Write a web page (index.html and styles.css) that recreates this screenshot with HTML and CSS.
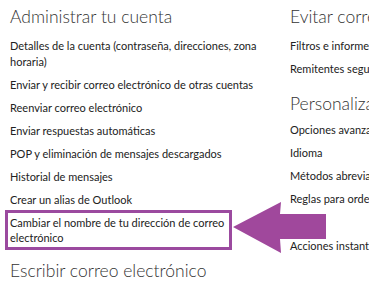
FILE: index.html
```html
<!DOCTYPE html>
<html lang="es">
<head>
    <meta charset="UTF-8">
    <title>Opciones</title>
    <link rel="stylesheet" href="styles.css">
</head>
<body>
    <div class="page">
        <div class="column left">
            <h2>Administrar tu cuenta</h2>
            <ul>
                <li><a href="#">Detalles de la cuenta (contraseña, direcciones, zona horaria)</a></li>
                <li><a href="#">Enviar y recibir correo electrónico de otras cuentas</a></li>
                <li><a href="#">Reenviar correo electrónico</a></li>
                <li><a href="#">Enviar respuestas automáticas</a></li>
                <li><a href="#">POP y eliminación de mensajes descargados</a></li>
                <li><a href="#">Historial de mensajes</a></li>
                <li><a href="#">Crear un alias de Outlook</a></li>
                <li class="highlight"><a href="#">Cambiar el nombre de tu dirección de correo electrónico</a></li>
            </ul>
            <h2>Escribir correo electrónico</h2>
        </div>
        <div class="column right">
            <h2>Evitar correo no deseado</h2>
            <ul>
                <li><a href="#">Filtros e informes</a></li>
                <li><a href="#">Remitentes seguros y bloqueados</a></li>
            </ul>
            <h2>Personalizar Outlook</h2>
            <ul>
                <li><a href="#">Opciones avanzadas de privacidad</a></li>
                <li><a href="#">Idioma</a></li>
                <li><a href="#">Métodos abreviados de teclado</a></li>
                <li class="tall"><a href="#">Reglas para ordenar mensajes nuevos</a></li>
                <li><a href="#">Acciones instantáneas</a></li>
            </ul>
        </div>
    </div>

    <!-- annotation arrow pointing at the highlighted link -->
    <svg class="arrow" width="100" height="60" viewBox="0 0 100 60">
        <polygon points="0,27 48,2 47,14 93,14 93,39 47,39 48,53" fill="#a0489c"/>
    </svg>
</body>
</html>
```

FILE: styles.css
```css
body {
    margin: 0;
    padding: 0;
    font-family: Lato, "Open Sans", Arial, sans-serif;
    background-color: #fff;
    color: #222;
    overflow: hidden;
}
.page {
    display: flex;
    padding-left: 10px;
    width: 600px;
    height: 286px;
    overflow: hidden;
}
.column {
    flex: none;
}
.left {
    width: 256px;
    margin-right: 24px;
}
.right {
    white-space: nowrap;
}
h2 {
    font-size: 17.5px;
    font-weight: 300;
    color: #333;
    margin: 5px 0 9px;
    line-height: 24px;
}
ul {
    list-style-type: none;
    margin: 0;
    padding: 0;
}
ul li {
    font-size: 11px;
    line-height: 16px;
    margin-bottom: 7px;
}
ul li a {
    color: #222;
    text-decoration: none;
}
.highlight {
    margin-left: -5px;
    width: 216px;
    padding: 2px 3px 2px 2px;
    border: 3px solid #9b4a9f;
    margin-top: -5px;
    line-height: 15px;
}
.left ul {
    margin-bottom: 9px;
}
.right ul {
    margin-bottom: 15px;
}
.right ul + h2 {
    margin-bottom: 6px;
}
.tall {
    padding-bottom: 24px;
}
.arrow {
    position: absolute;
    left: 233px;
    top: 200px;
}
```
